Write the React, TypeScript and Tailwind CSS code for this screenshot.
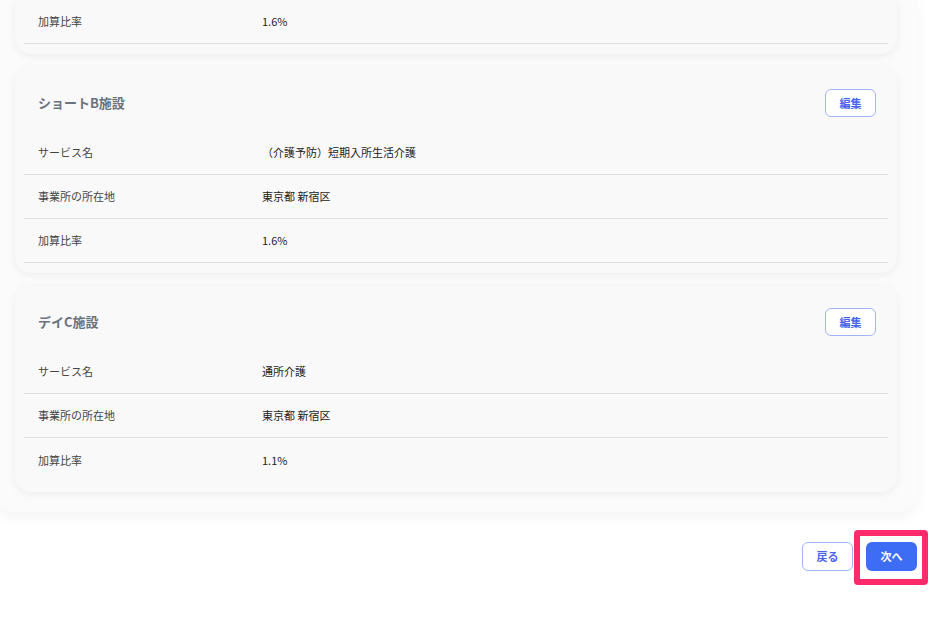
import React from 'react';

interface Row {
  label: string;
  value: string;
}

interface Facility {
  name: string;
  rows: Row[];
  lastDivider: boolean;
}

const facilities: Facility[] = [
  {
    name: 'ショートB施設',
    rows: [
      { label: 'サービス名', value: '（介護予防）短期入所生活介護' },
      { label: '事業所の所在地', value: '東京都 新宿区' },
      { label: '加算比率', value: '1.6%' },
    ],
    lastDivider: true,
  },
  {
    name: 'デイC施設',
    rows: [
      { label: 'サービス名', value: '通所介護' },
      { label: '事業所の所在地', value: '東京都 新宿区' },
      { label: '加算比率', value: '1.1%' },
    ],
    lastDivider: false,
  },
];

const InfoRow: React.FC<{ row: Row; divider: boolean }> = ({ row, divider }) => (
  <div
    className={`flex h-[44px] items-center px-[14px] text-[11px] ${
      divider ? 'border-b border-[#e0e0e0]' : ''
    }`}
  >
    <span className="w-[224px] text-[#444]">{row.label}</span>
    <span className="text-[#222]">{row.value}</span>
  </div>
);

const FacilityCard: React.FC<{ facility: Facility }> = ({ facility }) => (
  <div className="rounded-2xl bg-[#f9f9fa] shadow-[0_2px_8px_rgba(0,0,0,0.06)] px-[9px] pb-[10px]">
    <div className="flex items-center justify-between pl-[14px] pr-[12px] pt-[22px] pb-[14px]">
      <h3 className="text-[13px] font-bold text-[#6b7280]">{facility.name}</h3>
      <button className="h-[28px] w-[51px] rounded-md border border-[#a3b3f7] bg-white text-[11px] font-bold text-[#4a63ee]">
        編集
      </button>
    </div>
    {facility.rows.map((row, i) => (
      <InfoRow
        key={row.label}
        row={row}
        divider={i < facility.rows.length - 1 || facility.lastDivider}
      />
    ))}
  </div>
);

export default function App() {
  return (
    <div
      className="relative h-[621px] w-[936px] overflow-hidden bg-white"
      style={{ fontFamily: '"Noto Sans CJK JP", "Noto Sans", sans-serif' }}
    >
      <div className="-ml-[5px] w-[922px] rounded-b-2xl bg-[#fbfbfb] px-[20px] pb-[20px] shadow-[0_4px_14px_rgba(0,0,0,0.05)]">
        <div className="flex flex-col gap-[13px]">
          {/* previous card, scrolled mostly out of view */}
          <div className="rounded-b-2xl bg-[#f9f9fa] shadow-[0_2px_8px_rgba(0,0,0,0.06)] px-[9px] pb-[10px]">
            <InfoRow row={{ label: '加算比率', value: '1.6%' }} divider />
          </div>
          {facilities.map((f) => (
            <FacilityCard key={f.name} facility={f} />
          ))}
        </div>
      </div>

      <div className="mt-[30px] flex justify-end gap-[13px] pr-[19px]">
        <button className="h-[29px] w-[51px] rounded-md border border-[#a3b3f7] bg-white text-[11px] font-bold text-[#4a63ee]">
          戻る
        </button>
        <div className="relative">
          <button className="h-[29px] w-[51px] rounded-md bg-[#3d6cf5] text-[11px] font-bold text-white">
            次へ
          </button>
          <div className="pointer-events-none absolute -left-[12px] -right-[11px] -top-[12px] -bottom-[14px] rounded-[4px] border-[6px] border-[#ff2a6b]" />
        </div>
      </div>
    </div>
  );
}
